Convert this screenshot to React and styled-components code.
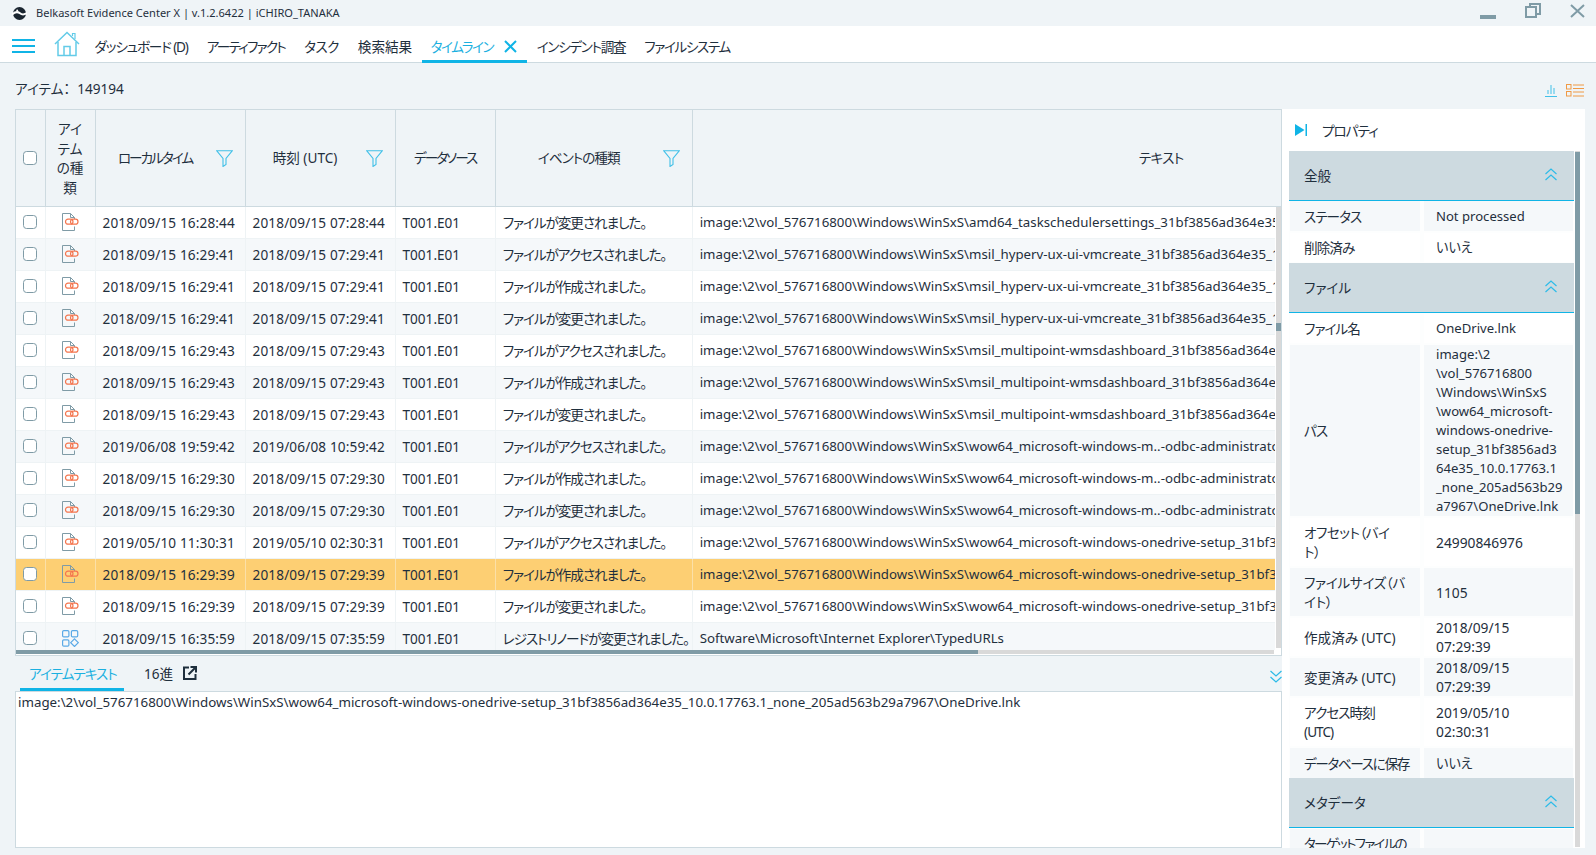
import React from 'react';
import styled, { createGlobalStyle } from 'styled-components';

const INK = '#1f2f3d';
const LINE = '#cddae0';
const PAGE = '#eff4f7';
const CYAN = '#10b4e6';
const THUMB = '#7f9ba6';
const TRACK = '#d9d9d9';

const Global = createGlobalStyle`
  *, *::before, *::after { box-sizing: border-box; }
  html, body { margin: 0; padding: 0; width: 100%; height: 100%; overflow: hidden; background: ${PAGE}; }
  body {
    font-family: "Noto Sans", "Noto Sans CJK JP", sans-serif;
    font-size: 13.6px;
    color: ${INK};
    font-feature-settings: "palt";
  }
`;

const Shell = styled.div`
  width: 1596px; height: 855px; display: flex; flex-direction: column; overflow: hidden; background: ${PAGE};
`;
const TitleBar = styled.div`
  height: 26px; display: flex; align-items: center; padding-left: 12px; flex: none;
`;
const AppName = styled.div`
  margin-left: 9px; font-size: 11.05px; line-height: 24px;
`;
const WindowButtons = styled.div`
  margin-left: auto; display: flex; align-items: flex-start; height: 26px;
  padding-right: 11px; gap: 29px;
`;
const TabBar = styled.nav`
  height: 37px; flex: none; background: #fff; border-bottom: 1px solid ${LINE};
  display: flex; align-items: stretch; padding-left: 12px;
`;
const Burger = styled.div`
  width: 23px; display: flex; flex-direction: column; gap: 4px; justify-content: center; margin-right: 19px; margin-top: 4px;
  i { display: block; height: 2px; background: ${CYAN}; }
`;
const HomeSlot = styled.div`
  width: 26px; display: flex; align-items: center; margin-right: 5px;
`;
const Tab = styled.div`
  display: flex; align-items: center; gap: 10px; padding: 6px ${p => p.$pad ?? 9.5}px 0;
  font-size: 13.6px; white-space: nowrap; letter-spacing: ${p => p.$ls ?? -1}px;
  color: ${p => (p.$active ? '#1bb0e0' : INK)};
  border-bottom: 3px solid ${p => (p.$active ? CYAN : 'transparent')};
  margin-bottom: -1px;
`;
const Main = styled.main`
  flex: 1; display: flex; flex-direction: column; padding: 0 11px 7px 15px; min-height: 0;
`;
const Toolbar = styled.div`
  height: 46px; flex: none; display: flex; align-items: center; font-size: 13.6px; padding-top: 4px;
`;
const ToolIcons = styled.div`
  margin-left: auto; display: flex; gap: 9px; align-items: center; padding-top: 4px; padding-right: 1px;
`;
const Work = styled.div`
  flex: 1; display: grid; grid-template-columns: 1267px 303px; min-height: 0;
`;
const LeftCol = styled.div`
  display: flex; flex-direction: column; min-width: 0; min-height: 0;
`;
const TableFrame = styled.section`
  height: 547px; flex: none; border: 1px solid ${LINE}; background: #fff;
  display: flex; flex-direction: column; overflow: hidden;
`;
const HeadWrap = styled.div`
  height: 97px; flex: none; overflow: hidden; background: ${PAGE}; border-bottom: 1px solid ${LINE};
`;
const COLS = '29.5px 50px 150px 150px 100.2px 197px 938px';
const HeadRow = styled.div`
  display: grid; grid-template-columns: ${COLS}; height: 100%; width: max-content;
`;
const HeadCell = styled.div`
  position: relative; display: flex; align-items: center; justify-content: center; text-align: center;
  border-right: 1px solid ${LINE}; padding-right: ${p => (p.$filter ? 30 : 0)}px;
  line-height: 19.5px; font-size: 13.6px; min-width: 0; letter-spacing: ${p => p.$ls ?? 0}px;
`;
const TypeHead = styled(HeadCell)`
  padding: 0 10px; word-break: break-all;
`;
const FilterSlot = styled.span`
  position: absolute; right: 11.5px; top: 40px; display: flex;
`;
const BodyArea = styled.div`
  height: 443px; flex: none; display: flex; min-height: 0;
`;
const Viewport = styled.div`
  width: 1259px; flex: none; overflow: hidden;
`;
const Row = styled.div`
  display: grid; grid-template-columns: ${COLS}; height: 32px; width: max-content;
  background: ${p => (p.$selected ? '#fdcf73' : p.$alt ? '#f5f8fa' : '#fff')};
  border-bottom: 1px solid #eef3f5;
`;
const Cell = styled.div`
  display: flex; align-items: center; justify-content: ${p => (p.$center ? 'center' : 'flex-start')};
  padding-left: ${p => (p.$center ? 0 : 7)}px; border-right: 1px solid ${p => (p.$selected ? '#fbe0a8' : '#eef3f5')};
  white-space: nowrap; overflow: hidden; padding-bottom: 1px;
`;
const DateCell = styled(Cell)`
  letter-spacing: 0.14px;
`;
const EventCell = styled(Cell)`
  letter-spacing: -1.05px;
`;
const PathCell = styled(Cell)`
  font-size: 13.28px;
`;
const Check = styled.input.attrs({ type: 'checkbox' })`
  appearance: none; margin: 0; width: 14px; height: 14px;
  border: 1px solid ${THUMB}; border-radius: 3.5px; background: #fff; flex: none;
`;
const VTrack = styled.div`
  width: 5px; margin-left: 1px; background: ${TRACK}; height: 441px; flex: none;
`;
const VThumb = styled.div`
  width: 100%; height: 8px; margin-top: 116px; background: ${THUMB};
`;
const HTrack = styled.div`
  height: 4px; width: 1258px; flex: none; background: ${TRACK};
`;
const HThumb = styled.div`
  height: 100%; width: 962px; background: ${THUMB};
`;
const LowerTabs = styled.div`
  height: 35px; flex: none; display: flex; align-items: stretch; padding-left: 5px;
`;
const LowerTab = styled.div`
  display: flex; align-items: center; gap: 10px; width: ${p => p.$w}px; padding-left: ${p => p.$pl}px;
  color: ${p => (p.$active ? '#1bb0e0' : INK)}; border-bottom: 3px solid ${p => (p.$active ? CYAN : 'transparent')};
  padding-top: 2px; white-space: nowrap; letter-spacing: ${p => p.$ls ?? 0}px;
`;
const Collapse = styled.div`
  margin-left: auto; display: flex; align-items: center; padding-top: 5px;
`;
const TextBox = styled.div`
  flex: 1; background: #fff; border: 1px solid ${LINE}; padding: 0 2px; line-height: 20px; white-space: nowrap; overflow: hidden; font-size: 13.33px;
`;
const Panel = styled.aside`
  background: #fff; display: flex; flex-direction: column; min-height: 0; overflow: hidden;
`;
const PanelHead = styled.div`
  height: 42px; flex: none; display: flex; align-items: center; padding-left: 13px; gap: 15px; letter-spacing: -1px;
`;
const PanelBody = styled.div`
  flex: 1; display: flex; min-height: 0; padding-left: 7px;
`;
const PropScroll = styled.div`
  width: 285px; flex: none; overflow: hidden; background: ${PAGE};
`;
const SectionHead = styled.div`
  height: 50px; background: ${LINE}; border-bottom: 1px solid ${CYAN};
  display: flex; align-items: center; justify-content: space-between; padding: 0 17px 2px 15px;
`;
const PropGrid = styled.div`
  display: flex; flex-direction: column; gap: 2px; padding: ${p => p.$top ?? 0}px 1px ${p => p.$bottom ?? 0}px; background: #fdfefe;
`;
const PropRow = styled.div`
  display: grid; grid-template-columns: 130px 149px; column-gap: 4px; height: ${p => p.$h}px;
`;
const PropLabel = styled.div`
  display: flex; align-items: center; padding-left: 14px; background: ${p => (p.$alt ? '#f5f8fa' : '#fff')}; line-height: 19px; overflow: hidden; white-space: nowrap;
  letter-spacing: ${p => p.$ls ?? -0.95}px;
`;
const PropValue = styled.div`
  display: flex; align-items: center; padding-left: 12px; background: ${p => (p.$alt ? '#f5f8fa' : '#fff')}; line-height: 19px; white-space: nowrap; overflow: hidden;
  font-size: ${p => (p.$digits ? 13.8 : 13.1)}px;
`;
const PanelTrack = styled.div`
  width: 5px; margin-left: 1px; flex: none; background: ${TRACK}; height: 696px;
`;
const PanelThumb = styled.div`
  height: 362px; margin-top: 1px; background: ${THUMB};
`;

const Logo = () => (
  <svg width="15" height="15" viewBox="0 0 15 15">
    <circle cx="7.5" cy="7.5" r="6.5" fill="#1a2530" />
    <path d="M0 8.5c3-2.8 6-2.8 8-1.2s4 1.6 7-.2" fill="none" stroke="#fff" strokeWidth="2" />
    <circle cx="5.2" cy="4.5" r="1" fill="#fff" />
  </svg>
);
const MinIcon = () => (
  <svg width="16" height="20" viewBox="0 0 16 20"><rect y="15" width="16" height="4" fill={THUMB} /></svg>
);
const RestoreIcon = () => (
  <svg width="16" height="20" viewBox="0 0 16 20" fill="none" stroke={THUMB} strokeWidth="2">
    <rect x="1" y="7" width="10" height="10" />
    <path d="M5 7V4h10v10h-4" />
  </svg>
);
const CloseIcon = () => (
  <svg width="15" height="20" viewBox="0 0 15 20" fill="none" stroke={THUMB} strokeWidth="2"><path d="M1 5l13 12M14 5L1 17" /></svg>
);
const HomeIcon = () => (
  <svg width="26" height="26" viewBox="0 0 26 26" fill="none" stroke="#63cbe8" strokeWidth="1.5">
    <path d="M1 13L13 1.5 25 13" />
    <path d="M4 11v13.5h18V11" />
    <path d="M10 24.5v-9h6v9" />
    <path d="M18.5 5V2.500h2.500V8" strokeWidth="1.2" />
  </svg>
);
const XIcon = () => (
  <svg width="15" height="15" viewBox="0 0 15 15" fill="none" stroke={CYAN} strokeWidth="2"><path d="M2 2l11 11M13 2L2 13" /></svg>
);
const BarsIcon = () => (
  <svg width="12" height="13" viewBox="0 0 12 13" fill="none" stroke="#41c0e8" strokeWidth="1">
    <path d="M0 12.5h12M3 10V6M6 10V1M9 10V4" />
  </svg>
);
const ListIcon = () => (
  <svg width="18" height="13" viewBox="0 0 18 13" fill="none" stroke="#f09a45" strokeWidth="1">
    <rect x=".5" y=".5" width="4.5" height="4.5" />
    <rect x=".5" y="7.5" width="4.5" height="4.5" />
    <path d="M7 1h11M7 4.500h11M7 8h11M7 12h11" />
  </svg>
);
const FilterIcon = () => (
  <svg width="17" height="17" viewBox="0 0 17 17" fill="none" stroke="#41c0e8" strokeWidth="1.1">
    <path d="M.8.8h15.400L10 8.500v6l-3 2v-8z" />
  </svg>
);
const LinkFile = () => (
  <svg width="17" height="18" viewBox="0 0 17 18" fill="none">
    <path d="M12.500 6V4.500l-4-4H.5v17h12v-4" stroke={THUMB} strokeWidth="1" />
    <path d="M8.500.5v4h4" stroke={THUMB} strokeWidth="1" />
    <rect x="3.500" y="6.200" width="7.500" height="5" rx="2.500" stroke="#f4764f" strokeWidth="1.200" />
    <rect x="8.500" y="6.200" width="7.500" height="5" rx="2.500" stroke="#f4764f" strokeWidth="1.200" />
  </svg>
);
const RegIcon = () => (
  <svg width="17" height="17" viewBox="0 0 17 17" fill="none" stroke="#5aa9e6" strokeWidth="1.200">
    <rect x=".6" y=".6" width="6.300" height="6.300" rx="1.200" />
    <rect x="9.400" y=".6" width="6.300" height="6.300" rx="1.200" />
    <rect x=".6" y="9.800" width="6.300" height="6.300" rx="1.200" />
    <path d="M12.500 8.800l3.800 3.900-3.800 3.800-3.800-3.800z" />
  </svg>
);
const Chevrons = ({ down }) => (
  <svg width="12" height="13" viewBox="0 0 12 13" fill="none" stroke="#2cbbe8" strokeWidth="1.200">
    <path d={down ? 'M.5 1l5.500 5 5.500-5M.5 7l5.500 5 5.500-5' : 'M.5 6L6 1l5.500 5M.5 12L6 7l5.500 5'} />
  </svg>
);
const PlayEnd = () => (
  <svg width="12" height="12" viewBox="0 0 12 12" fill={CYAN}>
    <path d="M0 0l9.500 6L0 12z" />
    <rect x="10.500" width="1.500" height="12" />
  </svg>
);
const ExternalIcon = () => (
  <svg width="14" height="14" viewBox="0 0 14 14" fill="none" stroke="#1f2f3d" strokeWidth="2">
    <path d="M6 1.500H1v11.500h11.500V8" />
    <path d="M5.500 8.500L12.500 1.500M7.500 1h5.500v5.500" />
  </svg>
);

const BASE = 'image:\\2\\vol_576716800\\Windows\\WinSxS\\';
const ONEDRIVE = 'wow64_microsoft-windows-onedrive-setup_31bf3856ad364e35_10.0.17763.1_none_205ad563b29a7967\\OneDrive.lnk';
const SCHED = 'amd64_taskschedulersettings_31bf3856ad364e35_10.0.17763.1_none_1f5d0d6b0c5e4a11\\taskschd.lnk';
const HYPER = 'msil_hyperv-ux-ui-vmcreate_31bf3856ad364e35_10.0.17763.1_none_6f4c3f2e8a0b7d21\\vmcreate.lnk';
const MULTI = 'msil_multipoint-wmsdashboard_31bf3856ad364e35_10.0.17763.1_none_8a1b2c3d4e5f6071\\WMS.lnk';
const ODBC = 'wow64_microsoft-windows-m..-odbc-administrator_31bf3856ad364e35_10.0.17763.1_none_3a2b1c0d\\odbc.lnk';

const CHANGED = 'ファイルが変更されました。';
const ACCESSED = 'ファイルがアクセスされました。';
const CREATED = 'ファイルが作成されました。';

const rows = [
  ['2018/09/15 16:28:44', '2018/09/15 07:28:44', CHANGED, BASE + SCHED],
  ['2018/09/15 16:29:41', '2018/09/15 07:29:41', ACCESSED, BASE + HYPER],
  ['2018/09/15 16:29:41', '2018/09/15 07:29:41', CREATED, BASE + HYPER],
  ['2018/09/15 16:29:41', '2018/09/15 07:29:41', CHANGED, BASE + HYPER],
  ['2018/09/15 16:29:43', '2018/09/15 07:29:43', ACCESSED, BASE + MULTI],
  ['2018/09/15 16:29:43', '2018/09/15 07:29:43', CREATED, BASE + MULTI],
  ['2018/09/15 16:29:43', '2018/09/15 07:29:43', CHANGED, BASE + MULTI],
  ['2019/06/08 19:59:42', '2019/06/08 10:59:42', ACCESSED, BASE + ODBC],
  ['2018/09/15 16:29:30', '2018/09/15 07:29:30', CREATED, BASE + ODBC],
  ['2018/09/15 16:29:30', '2018/09/15 07:29:30', CHANGED, BASE + ODBC],
  ['2019/05/10 11:30:31', '2019/05/10 02:30:31', ACCESSED, BASE + ONEDRIVE],
  ['2018/09/15 16:29:39', '2018/09/15 07:29:39', CREATED, BASE + ONEDRIVE],
  ['2018/09/15 16:29:39', '2018/09/15 07:29:39', CHANGED, BASE + ONEDRIVE],
  ['2018/09/15 16:35:59', '2018/09/15 07:35:59', 'レジストリノードが変更されました。', 'Software\\Microsoft\\Internet Explorer\\TypedURLs'],
];

const PATH_LINES = [
  'image:\\2', '\\vol_576716800', '\\Windows\\WinSxS', '\\wow64_microsoft-', 'windows-onedrive-',
  'setup_31bf3856ad3', '64e35_10.0.17763.1', '_none_205ad563b29', 'a7967\\OneDrive.lnk',
];

const lines = arr => arr.map((l, i) => <React.Fragment key={i}>{i > 0 && <br />}{l}</React.Fragment>);

const Prop = ({ label, value, h, alt, digits, ls }) => (
  <PropRow $h={h}>
    <PropLabel $alt={alt} $ls={ls}><span>{label}</span></PropLabel>
    <PropValue $alt={alt} $digits={digits}><span>{value}</span></PropValue>
  </PropRow>
);

const Section = ({ title }) => (
  <SectionHead><span>{title}</span><Chevrons /></SectionHead>
);

export default function App() {
  return (
    <Shell>
      <Global />
      <TitleBar>
        <Logo />
        <AppName>Belkasoft Evidence Center X | v.1.2.6422 | iCHIRO_TANAKA</AppName>
        <WindowButtons><MinIcon /><RestoreIcon /><CloseIcon /></WindowButtons>
      </TitleBar>
      <TabBar>
        <Burger><i /><i /><i /></Burger>
        <HomeSlot><HomeIcon /></HomeSlot>
        <Tab $ls={-1.17}>ダッシュボード (D)</Tab>
        <Tab $ls={-1.75}>アーティファクト</Tab>
        <Tab $ls={-0.5}>タスク</Tab>
        <Tab $ls={0}>検索結果</Tab>
        <Tab $active $pad={9} $ls={-1.5}>タイムライン<XIcon /></Tab>
        <Tab $ls={-1.3}>インシデント調査</Tab>
        <Tab $ls={-1.4}>ファイルシステム</Tab>
      </TabBar>
      <Main>
        <Toolbar>
          <span>アイテム：&nbsp; 149194</span>
          <ToolIcons><BarsIcon /><ListIcon /></ToolIcons>
        </Toolbar>
        <Work>
          <LeftCol>
            <TableFrame>
              <HeadWrap>
                <HeadRow>
                  <HeadCell><Check /></HeadCell>
                  <TypeHead>アイテムの種類</TypeHead>
                  <HeadCell $filter $ls={-2}>ローカルタイム<FilterSlot><FilterIcon /></FilterSlot></HeadCell>
                  <HeadCell $filter>時刻 (UTC)<FilterSlot><FilterIcon /></FilterSlot></HeadCell>
                  <HeadCell $ls={-2}>データソース</HeadCell>
                  <HeadCell $filter $ls={-1}>イベントの種類<FilterSlot><FilterIcon /></FilterSlot></HeadCell>
                  <HeadCell $ls={-0.6}>テキスト</HeadCell>
                </HeadRow>
              </HeadWrap>
              <BodyArea>
                <Viewport>
                  {rows.map((r, i) => {
                    const selected = i === 11;
                    return (
                      <Row key={i} $alt={i % 2 === 1} $selected={selected}>
                        <Cell $center $selected={selected}><Check /></Cell>
                        <Cell $center $selected={selected}>{i === 13 ? <RegIcon /> : <LinkFile />}</Cell>
                        <DateCell $selected={selected}>{r[0]}</DateCell>
                        <DateCell $selected={selected}>{r[1]}</DateCell>
                        <Cell $selected={selected}>T001.E01</Cell>
                        <EventCell $selected={selected}>{r[2]}</EventCell>
                        <PathCell $selected={selected}>{r[3]}</PathCell>
                      </Row>
                    );
                  })}
                </Viewport>
                <VTrack><VThumb /></VTrack>
              </BodyArea>
              <HTrack><HThumb /></HTrack>
            </TableFrame>
            <LowerTabs>
              <LowerTab $active $w={104} $pl={9} $ls={-1}>アイテムテキスト</LowerTab>
              <LowerTab $w={90} $pl={20}>16進<ExternalIcon /></LowerTab>
              <Collapse><Chevrons down /></Collapse>
            </LowerTabs>
            <TextBox>{BASE + ONEDRIVE}</TextBox>
          </LeftCol>
          <Panel>
            <PanelHead><PlayEnd />プロパティ</PanelHead>
            <PanelBody>
              <PropScroll>
                <Section title="全般" />
                <PropGrid $bottom={1}>
                  <Prop label="ステータス" value="Not processed" h={30} alt />
                  <Prop label="削除済み" value="いいえ" h={29} />
                </PropGrid>
                <Section title="ファイル" />
                <PropGrid $top={1}>
                  <Prop label="ファイル名" value="OneDrive.lnk" h={29} />
                  <Prop label="パス" value={lines(PATH_LINES)} h={171} alt />
                  <Prop label={lines(['オフセット（バイ', 'ト）'])} value="24990846976" h={48} digits ls={-0.5} />
                  <Prop label={lines(['ファイルサイズ（バ', 'イト）'])} value="1105" h={48} alt digits ls={-0.3} />
                  <Prop label="作成済み (UTC)" value={lines(['2018/09/15', '07:29:39'])} h={38} digits ls={0} />
                  <Prop label="変更済み (UTC)" value={lines(['2018/09/15', '07:29:39'])} h={38} alt digits ls={0} />
                  <Prop label={lines(['アクセス時刻', '(UTC)'])} value={lines(['2019/05/10', '02:30:31'])} h={48} digits />
                  <Prop label="データベースに保存" value="いいえ" h={30} alt ls={-1.35} />
                </PropGrid>
                <Section title="メタデータ" />
                <PropGrid $top={1}>
                  <Prop label={lines(['ターゲットファイルの', 'パス'])} value="" h={48} alt ls={-1.8} />
                </PropGrid>
              </PropScroll>
              <PanelTrack><PanelThumb /></PanelTrack>
            </PanelBody>
          </Panel>
        </Work>
      </Main>
    </Shell>
  );
}
